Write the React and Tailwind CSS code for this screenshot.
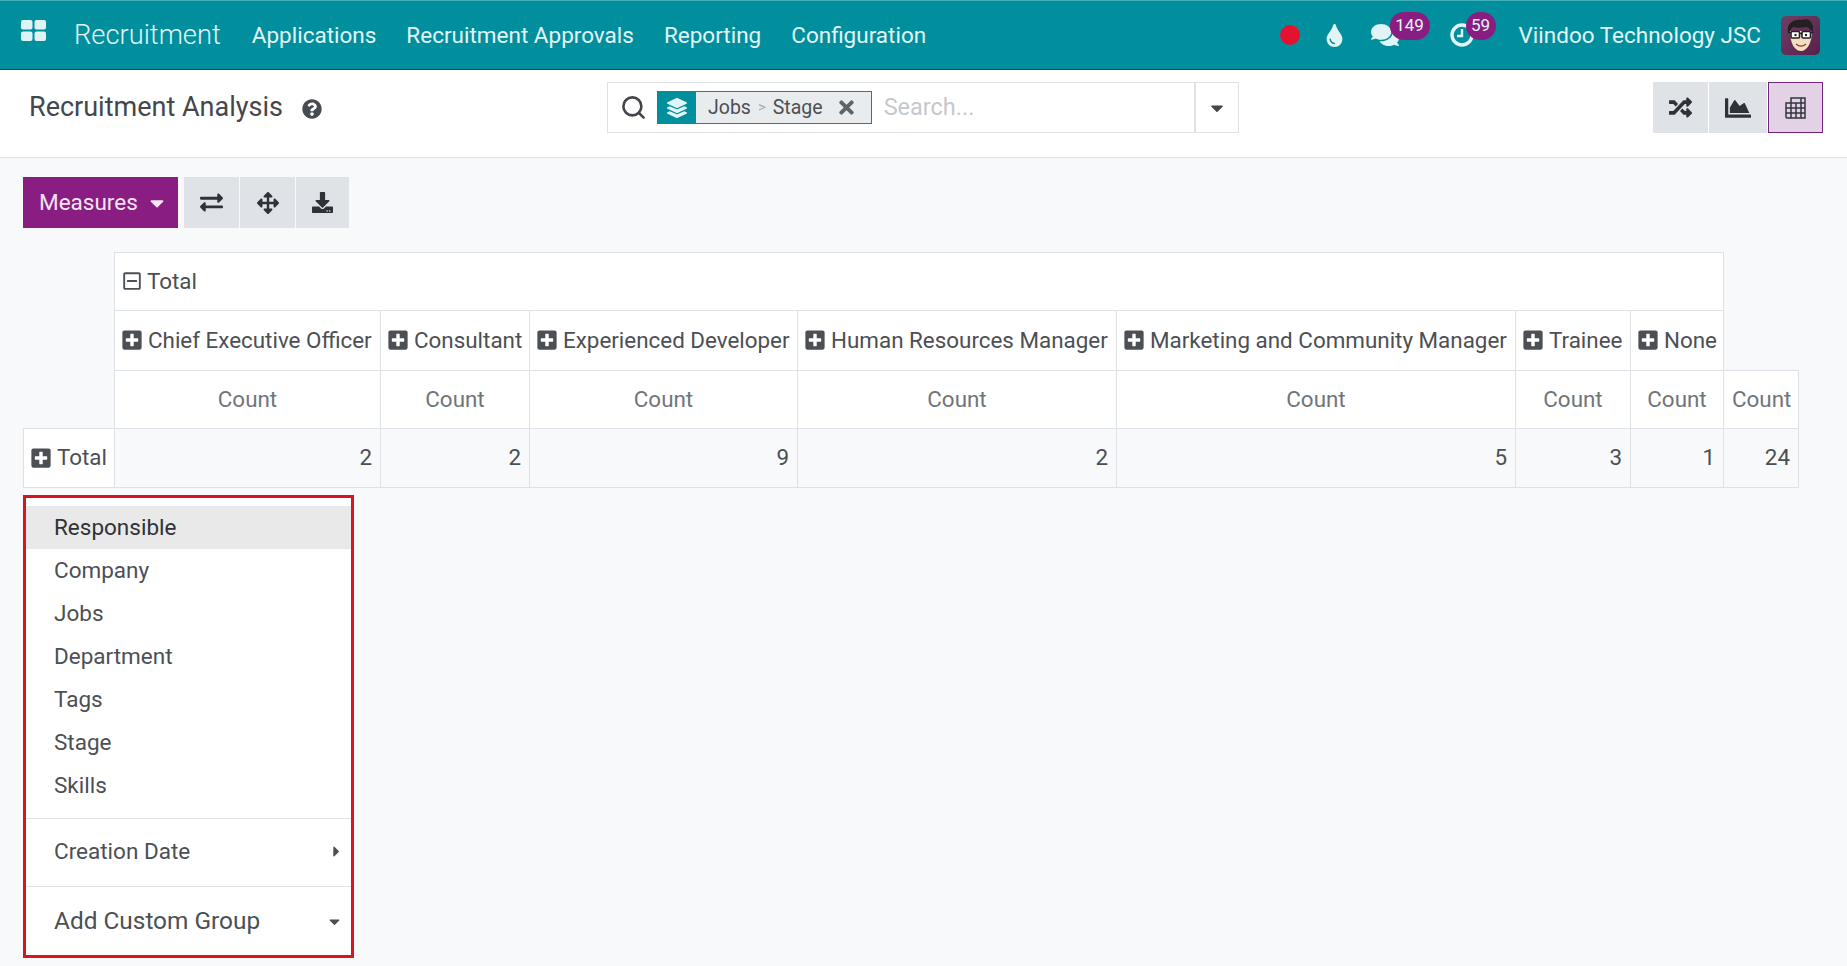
import { Search } from 'lucide-react'
import { FaCaretDown, FaCaretRight, FaChartArea, FaComments, FaDownload, FaArrowsAlt, FaExchangeAlt, FaLayerGroup, FaPlusSquare, FaQuestionCircle, FaRandom, FaRegMinusSquare, FaTimes, FaTint } from 'react-icons/fa'

const MENU = ['Applications', 'Recruitment Approvals', 'Reporting', 'Configuration']
const JOBS = [
  { name: 'Chief Executive Officer', count: 2, width: 'w-[266px]' },
  { name: 'Consultant', count: 2, width: 'w-[149px]' },
  { name: 'Experienced Developer', count: 9, width: 'w-[268px]' },
  { name: 'Human Resources Manager', count: 2, width: 'w-[319px]' },
  { name: 'Marketing and Community Manager', count: 5, width: 'w-[399px]' },
  { name: 'Trainee', count: 3, width: 'w-[115px]' },
  { name: 'None', count: 1, width: 'w-[93px]' },
]
const GROUPS = ['Responsible', 'Company', 'Jobs', 'Department', 'Tags', 'Stage', 'Skills']

export default function App() {
  return (
    <div className="h-screen overflow-hidden bg-[#f8f9fa] text-[#4c4f54] font-['Roboto',sans-serif]">
      <NavBar />
      <ControlPanel />

      <div className="pl-[23px] pt-[19px]">
        <div className="flex">
          <button className="flex items-center w-[155px] h-[51px] pl-[16px] mr-[6px] bg-[#8a1d82] text-[#f3e6f2] text-[22.5px]">
            Measures <FaCaretDown size={22} className="ml-[8px]" />
          </button>
          <ToolButton className="w-[55px] mr-px"><FaExchangeAlt size={23} /></ToolButton>
          <ToolButton className="w-[55px] mr-px"><FaArrowsAlt size={22} /></ToolButton>
          <ToolButton className="w-[53px]"><FaDownload size={21} /></ToolButton>
        </div>

        <PivotTable />
        <GroupMenu />
      </div>
    </div>
  )
}

function NavBar() {
  return (
    <div className="flex items-center h-[70px] bg-[#018f9e] border-t border-t-[#3fb0bb] border-b border-b-[#01525b] text-[#e2f5f6]">
      <svg width="25" height="21" viewBox="0 0 25 21" className="ml-[21px] mb-[10px] fill-[#dff3f5]">
        <rect x="0" y="0" width="11.5" height="9.5" rx="2" />
        <rect x="13.5" y="0" width="11.5" height="9.5" rx="2" />
        <rect x="0" y="11.5" width="11.5" height="9.5" rx="2" />
        <rect x="13.5" y="11.5" width="11.5" height="9.5" rx="2" />
      </svg>
      <span className="ml-[28px] mr-[31px] text-[27.3px] font-light">Recruitment</span>
      <div className="flex gap-[30px] pt-[2px] text-[22.5px]">
        {MENU.map(m => <span key={m}>{m}</span>)}
      </div>

      <div className="flex items-center ml-auto mr-[27px]">
        <span className="w-5 h-5 rounded-full bg-[#e4112f] mr-[23px]" />
        <FaTint size={23} className="mr-[25px]" />
        <div className="relative mr-[51px]">
          <FaComments size={28} className="block" />
          <span className="absolute -top-[9px] left-[19px] flex items-center justify-center w-[40px] h-[28px] rounded-full bg-[#8a1d82] text-[17px]">149</span>
        </div>
        <div className="relative mr-[45px]">
          <svg width="24" height="24" viewBox="0 0 24 24" className="block fill-none stroke-[#e2f5f6]">
            <circle cx="12" cy="12" r="10" strokeWidth="3.4" />
            <path d="M12 6v7H7" strokeWidth="2.4" />
          </svg>
          <span className="absolute -top-[11px] left-[16px] flex items-center justify-center w-[30px] h-[28px] rounded-full bg-[#8a1d82] text-[17px]">59</span>
        </div>
        <span className="mr-[20px] pt-[2px] text-[22.5px]">Viindoo Technology JSC</span>
        <Avatar />
      </div>
    </div>
  )
}

function Avatar() {
  return (
    <svg width="39" height="39" viewBox="0 0 39 39">
      <defs>
        <linearGradient id="avatarBg" x1="0" y1="0" x2="1" y2="1">
          <stop offset="0" stopColor="#6e4065" />
          <stop offset="1" stopColor="#5a1f4c" />
        </linearGradient>
      </defs>
      <rect width="39" height="39" rx="5" fill="url(#avatarBg)" />
      <path d="M9 15c0 13 5 20 11 20s11-8 11-20z" fill="#f6dcc0" />
      <path d="M7 17C5 7 13 3 21 4c4-2 9 0 10 4 2 3 1 6 0 9-1-3-2-5-5-6-5 1-11 1-14 0-2 2-3 4-5 6z" fill="#23201f" />
      <rect x="10" y="15.5" width="8.5" height="6.5" rx="1" fill="#fff" stroke="#222" strokeWidth="1.6" />
      <rect x="21" y="15.5" width="8.5" height="6.5" rx="1" fill="#fff" stroke="#222" strokeWidth="1.6" />
      <path d="M18.5 17.5h2.5M7 16l3 1M29.5 17l3-1" stroke="#222" strokeWidth="1.4" />
      <circle cx="14.5" cy="19" r="1.2" fill="#222" />
      <circle cx="25" cy="19" r="1.2" fill="#222" />
      <path d="M15 28c3 2.5 7 2.5 10 0" fill="none" stroke="#7a4a35" strokeWidth="1.3" />
    </svg>
  )
}

function ControlPanel() {
  return (
    <div className="flex items-start h-[88px] bg-white border-b border-[#dee2e6] pt-[12px]">
      <div className="flex items-center w-[607px] h-[50px] pl-[29px]">
        <span className="text-[27px] text-[#44474c]">Recruitment Analysis</span>
        <FaQuestionCircle size={20} className="ml-[19px] mt-[3px] text-[#474b52]" />
      </div>

      <div className="flex w-[632px] h-[51px] border border-[#dee2e6] bg-white">
        <div className="flex items-center flex-1 pl-[12px]">
          <Search size={27} strokeWidth={2.3} className="text-[#43464b]" />
          <div className="flex items-center h-[33px] ml-[10px] border border-[#018f9e] bg-[#e9ecef]">
            <div className="flex items-center justify-center w-[38px] h-full bg-[#018f9e]">
              <FaLayerGroup size={20} className="text-[#e2f5f6]" />
            </div>
            <span className="ml-[12px] text-[19.5px] text-[#4c4f54]">Jobs</span>
            <span className="mx-[7px] text-[15px] text-[#a5a9ae]">&gt;</span>
            <span className="text-[19.5px] text-[#4c4f54]">Stage</span>
            <FaTimes size={21} className="ml-[13px] mr-[14px] text-[#60646a]" />
          </div>
          <span className="ml-[12px] text-[23.5px] text-[#c5c9cd]">Search...</span>
        </div>
        <div className="flex items-center justify-center w-[44px] border-l-2 border-[#dee2e6]">
          <FaCaretDown size={20} className="text-[#43464b]" />
        </div>
      </div>

      <div className="flex ml-auto mr-[24px] h-[51px]">
        <ToolButton className="w-[55px] mr-px"><FaRandom size={23} /></ToolButton>
        <ToolButton className="w-[58px] mr-px"><FaChartArea size={26} /></ToolButton>
        <button className="flex items-center justify-center w-[55px] h-[51px] border border-[#71267b] bg-[#e3d1e6] text-[#33363b]">
          <svg width="24" height="24" viewBox="0 0 24 24" className="fill-none stroke-current" strokeWidth="1.5">
            <path d="M7 7V2h14v20H3a1 1 0 0 1-1-1V7zM2 12h19M2 17h19M7 7v15M12 7v15M17 2v20M7 7h14" />
          </svg>
        </button>
      </div>
    </div>
  )
}

function ToolButton({ className, children }) {
  return (
    <button className={`flex items-center justify-center h-[51px] bg-[#dfe3e7] text-[#2f3338] ${className}`}>
      {children}
    </button>
  )
}

function PivotTable() {
  const border = 'border border-[#dee2e6]'
  return (
    <table className="table-fixed w-[1775px] mt-[24px] border-collapse text-[22.4px]">
      <colgroup>
        <col className="w-[91px]" />
        {JOBS.map(j => <col key={j.name} className={j.width} />)}
        <col className="w-[75px]" />
      </colgroup>
      <tbody>
        <tr className="h-[58px]">
          <td rowSpan={3} />
          <th colSpan={7} className={`${border} bg-white px-2 text-left font-normal`}>
            <span className="flex items-center gap-[5px]"><FaRegMinusSquare size={20} className="-ml-px" />Total</span>
          </th>
          <td />
        </tr>
        <tr className="h-[60px]">
          {JOBS.map(j => (
            <th key={j.name} className={`${border} bg-white px-2 text-left font-normal whitespace-nowrap`}>
              <span className="flex items-center gap-[5px]"><FaPlusSquare size={22} className="shrink-0 -ml-[2px]" />{j.name}</span>
            </th>
          ))}
          <td />
        </tr>
        <tr className="h-[58px]">
          {JOBS.map(j => <th key={j.name} className={`${border} bg-white px-2 text-center font-normal text-[#70757a]`}>Count</th>)}
          <th className={`${border} bg-white px-2 text-center font-normal text-[#70757a]`}>Count</th>
        </tr>
        <tr className="h-[59px]">
          <th className={`${border} bg-white px-2 text-left font-normal whitespace-nowrap`}>
            <span className="flex items-center gap-[5px]"><FaPlusSquare size={22} className="shrink-0 -ml-[2px]" />Total</span>
          </th>
          {JOBS.map(j => <td key={j.name} className={`${border} px-2 text-right`}>{j.count}</td>)}
          <td className={`${border} px-2 text-right`}>24</td>
        </tr>
      </tbody>
    </table>
  )
}

function GroupMenu() {
  return (
    <div className="w-[331px] mt-[7px] border-[3px] border-[#d8141c] bg-white text-[22.5px] text-[#4c4f54]">
      <div className="pt-[8px] pb-[11px]">
        {GROUPS.map((g, i) => (
          <div key={g} className={`flex items-center h-[43px] pl-[28px] ${i === 0 ? 'bg-[#e9e9e9] text-[#2f3236]' : ''}`}>{g}</div>
        ))}
      </div>
      <div className="flex items-center justify-between h-[68px] pl-[28px] pr-[6px] pb-[2px] border-t border-[#dee2e6]">
        Creation Date <FaCaretRight size={17} />
      </div>
      <div className="flex items-center justify-between h-[69px] pl-[28px] pr-[8px] border-t border-[#dee2e6] text-[24.4px]">
        Add Custom Group <FaCaretDown size={17} />
      </div>
    </div>
  )
}
